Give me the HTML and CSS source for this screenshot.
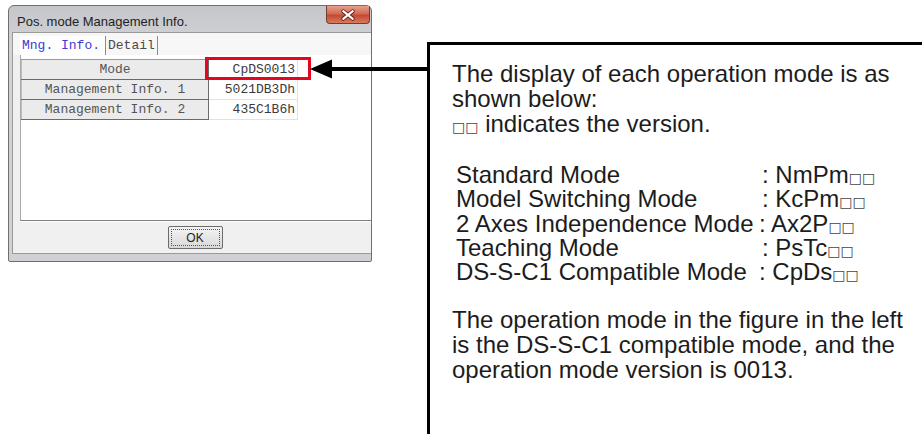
FILE: index.html
```html
<!DOCTYPE html>
<html lang="en">
<head>
  <meta charset="UTF-8" />
  <title>Pos. mode Management Info.</title>
  <link rel="stylesheet" href="styles.css">
</head>
<body>
  <div class="page">
    <div class="window">
      <div class="titlebar">
        <span class="title">Pos. mode Management Info.</span>
        <span class="close">
          <svg width="44" height="18" viewBox="0 0 44 18">
            <path d="M17 5 L27 13 M27 5 L17 13" stroke="#5a1a12" stroke-width="4" stroke-linecap="round"/>
            <path d="M17 5 L27 13 M27 5 L17 13" stroke="#fff" stroke-width="2.2" stroke-linecap="round"/>
          </svg>
        </span>
      </div>
      <div class="client">
        <div class="tabs">
          <span class="tab tab-active">Mng. Info.</span>
          <span class="tab">Detail</span>
        </div>
        <div class="panel">
          <table class="info">
            <tr><th>Mode</th><td>CpDS0013</td></tr>
            <tr><th>Management Info. 1</th><td>5021DB3Dh</td></tr>
            <tr><th>Management Info. 2</th><td>435C1B6h</td></tr>
          </table>
          <div class="highlight"></div>
        </div>
        <div class="buttons">
          <button class="ok"><span>OK</span></button>
        </div>
      </div>
    </div>

    <div class="note">
      <div class="note-body">
        <p>The display of each operation mode is as shown below:<br><span class="ver">□□</span> indicates the version.</p>

        <div class="modes">
          <div class="mode-row"><span class="mode-name">Standard Mode</span><span class="mode-code">: NmPm<span class="ver">□□</span></span></div>
          <div class="mode-row"><span class="mode-name">Model Switching Mode</span><span class="mode-code">: KcPm<span class="ver">□□</span></span></div>
          <div class="mode-row"><span class="mode-name">2 Axes Independence Mode</span><span class="mode-code tight">: Ax2P<span class="ver">□□</span></span></div>
          <div class="mode-row"><span class="mode-name">Teaching Mode</span><span class="mode-code">: PsTc<span class="ver">□□</span></span></div>
          <div class="mode-row"><span class="mode-name">DS-S-C1 Compatible Mode</span><span class="mode-code tight">: CpDs<span class="ver">□□</span></span></div>
        </div>

        <p>The operation mode in the figure in the left is the DS-S-C1 compatible mode, and the operation mode version is 0013.</p>
      </div>
    </div>

    <!-- pointer from the callout to the Mode cell -->
    <svg class="arrow" width="120" height="20" viewBox="0 0 120 20">
      <line x1="18" y1="10" x2="120" y2="10" stroke="#000" stroke-width="4"/>
      <polygon points="0,10 22,0.5 22,19.5" fill="#000"/>
    </svg>
  </div>
</body>
</html>
```

FILE: styles.css
```css
body {
  margin: 0;
  background-color: #fff;
  font-family: 'Liberation Sans', Arial, sans-serif;
}

.page {
  position: relative;
  width: 922px;
  height: 434px;
  overflow: hidden;
  display: flex;
  align-items: flex-start;
}

/* ---- dialog window ---- */

.window {
  box-sizing: border-box;
  flex-shrink: 0;
  width: 364px;
  height: 257px;
  margin: 5px 0 0 8px;
  border: 1px solid #6f6f6f;
  border-radius: 6px 6px 2px 2px;
  background: linear-gradient(#c4c6c9, #d1d3d6 40px, #cfd1d4);
  display: flex;
  flex-direction: column;
  padding: 0 0 7px 0;
}

.titlebar {
  height: 26px;
  display: flex;
  justify-content: space-between;
  align-items: flex-start;
  flex-shrink: 0;
}

.title {
  font-size: 13px;
  color: #1e1e1e;
  padding: 8px 0 0 8px;
}

.close {
  width: 44px;
  height: 18px;
  margin-right: 1px;
  border: 1px solid #7a3a2e;
  border-top: none;
  border-radius: 0 0 4px 4px;
  background: linear-gradient(#e8a08c, #d26b52 45%, #c24a33 55%, #d97a5c);
  box-sizing: border-box;
  display: flex;
}

.client {
  flex: 1;
  margin: 0 0 0 3px;
  background-color: #f0f0f0;
  border: 1px solid #9a9a9a;
  border-right: none;
  display: flex;
  flex-direction: column;
}

.tabs {
  height: 22px;
  padding: 3px 0 0 7px;
  box-sizing: border-box;
  display: flex;
  font-family: 'Liberation Mono', 'Courier New', monospace;
  font-size: 13px;
  background-color: #f7f7f7;
}

.tab {
  padding: 1px 2px 0 2px;
  color: #4a4a4a;
  border-right: 1px solid #8c8c8c;
  line-height: 17px;
}

.tab-active {
  color: #3a3ad6;
  background-color: #fff;
  padding-right: 5px;
}

.panel {
  position: relative;
  flex: 1;
  margin-left: 7px;
  background-color: #fff;
  border-left: 1px solid #a9a9a9;
  border-bottom: 1px solid #7d7d7d;
  box-shadow: 0 1px 0 #fff;
  padding-top: 4px;
}

.info {
  border-collapse: collapse;
  font-family: 'Liberation Mono', 'Courier New', monospace;
  font-size: 13px;
  color: #3a3a3a;
}

.info th {
  width: 186px;
  height: 19px;
  padding: 0;
  font-weight: normal;
  white-space: nowrap;
  color: #555;
  background-color: #ebebeb;
  border: 1px solid #6a6a6a;
  border-left-color: #bdbdbd;
  border-top-color: #fdfdfd;
}

.info tr:first-child th {
  border-top-color: #9a9a9a;
}

.info td {
  width: 86px;
  height: 19px;
  padding: 0 2px 0 0;
  text-align: right;
  white-space: nowrap;
  border: 1px solid #e2e2e2;
}

.highlight {
  position: absolute;
  left: 184px;
  top: 2px;
  width: 106px;
  height: 23px;
  box-sizing: border-box;
  border: 3px solid #e3061e;
}

.buttons {
  height: 32px;
  display: flex;
  justify-content: center;
  align-items: center;
  padding-left: 6px;
}

.ok {
  width: 55px;
  height: 23px;
  padding: 2px;
  border: 1px solid #6b6b6b;
  border-radius: 2px;
  background: linear-gradient(#f4f4f4, #e6e6e6 50%, #d8d8d8);
  font-family: 'Liberation Sans', Arial, sans-serif;
  font-size: 12px;
  color: #222;
}

.ok span {
  display: block;
  height: 100%;
  line-height: 17px;
  border: 1px dotted #555;
  box-sizing: border-box;
}

/* ---- callout ---- */

.note {
  flex-shrink: 0;
  margin: 42px 0 0 55px;
  width: 600px;
  height: 420px;
  border-left: 3px solid #000;
  border-top: 3px solid #000;
  padding: 16px 0 0 22px;
}

.note-body {
  width: 462px;
  font-size: 24px;
  line-height: 25px;
  color: #1c1c1c;
}

.note-body p {
  margin: 0;
}

.ver {
  font-family: 'DejaVu Sans', sans-serif;
  font-size: 14px;
  line-height: 1;
  color: #444;
}

.modes {
  margin: 27px 0 23px 4px;
  line-height: 24.25px;
}

.mode-row {
  display: flex;
}

.mode-name {
  width: 306px;
  flex-shrink: 0;
}

.mode-code.tight {
  margin-left: -3px;
}

.arrow {
  position: absolute;
  left: 310px;
  top: 59px;
}
```
